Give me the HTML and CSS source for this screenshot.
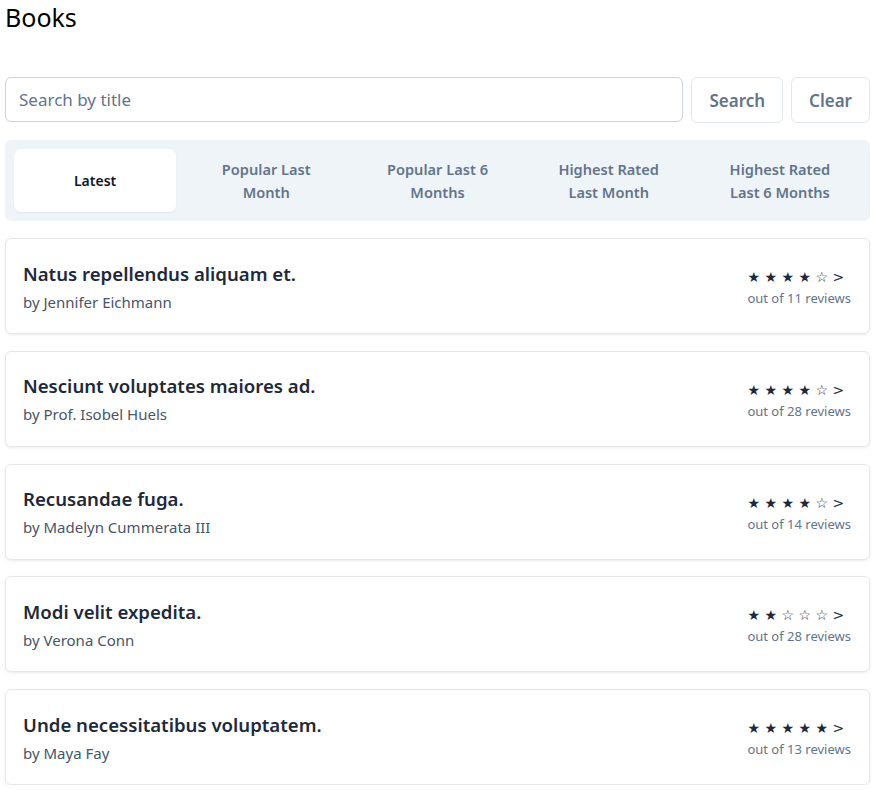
FILE: index.html
```html
<!DOCTYPE html>
<html lang="en">
<head>
<meta charset="utf-8">
<title>Books</title>
<link rel="stylesheet" href="styles.css">
</head>
<body>
<div class="page">
  <h1 class="title">Books</h1>
  <form class="search">
    <input class="search-input" type="text" placeholder="Search by title">
    <button class="btn" type="button">Search</button>
    <button class="btn" type="button">Clear</button>
  </form>
  <div class="tabs">
    <button class="tab active" type="button">Latest</button>
    <button class="tab" type="button">Popular Last<br>Month</button>
    <button class="tab" type="button">Popular Last 6<br>Months</button>
    <button class="tab" type="button">Highest Rated<br>Last Month</button>
    <button class="tab" type="button">Highest Rated<br>Last 6 Months</button>
  </div>
  <ul class="list">
    <li class="card">
      <div class="info">
        <div class="book-title">Natus repellendus aliquam et.</div>
        <div class="author">by Jennifer Eichmann</div>
      </div>
      <div class="rating">
        <div class="stars">★ ★ ★ ★ ☆ &gt;</div>
        <div class="reviews">out of 11 reviews</div>
      </div>
    </li>
    <li class="card">
      <div class="info">
        <div class="book-title">Nesciunt voluptates maiores ad.</div>
        <div class="author">by Prof. Isobel Huels</div>
      </div>
      <div class="rating">
        <div class="stars">★ ★ ★ ★ ☆ &gt;</div>
        <div class="reviews">out of 28 reviews</div>
      </div>
    </li>
    <li class="card">
      <div class="info">
        <div class="book-title">Recusandae fuga.</div>
        <div class="author">by Madelyn Cummerata III</div>
      </div>
      <div class="rating">
        <div class="stars">★ ★ ★ ★ ☆ &gt;</div>
        <div class="reviews">out of 14 reviews</div>
      </div>
    </li>
    <li class="card">
      <div class="info">
        <div class="book-title">Modi velit expedita.</div>
        <div class="author">by Verona Conn</div>
      </div>
      <div class="rating">
        <div class="stars">★ ★ ☆ ☆ ☆ &gt;</div>
        <div class="reviews">out of 28 reviews</div>
      </div>
    </li>
    <li class="card">
      <div class="info">
        <div class="book-title">Unde necessitatibus voluptatem.</div>
        <div class="author">by Maya Fay</div>
      </div>
      <div class="rating">
        <div class="stars">★ ★ ★ ★ ★ &gt;</div>
        <div class="reviews">out of 13 reviews</div>
      </div>
    </li>
  </ul>
</div>
</body>
</html>
```

FILE: styles.css
```css
* { box-sizing: border-box; }
html, body { margin: 0; padding: 0; background: #fff; }
body {
  font-family: "Noto Sans", "Open Sans", sans-serif;
  color: #1e293b;
}
.page {
  padding: 0 6px 0 5px;
}
.title {
  margin: 0;
  padding-top: 1px;
  font-size: 25px;
  font-weight: 400;
  line-height: 32px;
  color: #000;
}
.search {
  display: flex;
  gap: 8px;
  margin-top: 44px;
}
.search-input {
  flex: 1;
  height: 45px;
  border: 1px solid #cbd5e1;
  border-radius: 6px;
  padding: 0 13px;
  font: inherit;
  font-size: 17px;
  color: #1e293b;
}
.search-input::placeholder { color: #64748b; }
.btn {
  height: 46px;
  padding: 0 17px;
  background: #fff;
  border: 1px solid #e2e8f0;
  border-radius: 6px;
  font: inherit;
  font-size: 17px;
  font-weight: 600;
  color: #64748b;
}
.tabs {
  margin-top: 17px;
  background: #eff4f8;
  border-radius: 6px;
  padding: 9px;
  display: grid;
  grid-template-columns: repeat(5, 1fr);
  gap: 9px;
}
.tab {
  height: 63px;
  border: none;
  background: transparent;
  border-radius: 7px;
  font: inherit;
  font-size: 14.6px;
  font-weight: 600;
  line-height: 23px;
  color: #64748b;
}
.tab.active {
  background: #fff;
  color: #0f172a;
  font-size: 14px;
  box-shadow: 0 1px 2px rgba(0,0,0,0.05);
}
.list {
  list-style: none;
  margin: 17px 0 0;
  padding: 0;
  display: flex;
  flex-direction: column;
  gap: 16.75px;
}
.card {
  height: 96px;
  border: 1px solid #e5e7eb;
  border-radius: 6px;
  box-shadow: 0 1px 3px rgba(0,0,0,0.08);
  padding: 0 18px 0 17px;
  display: flex;
  align-items: center;
  justify-content: space-between;
}
.book-title {
  font-size: 18.6px;
  font-weight: 600;
  color: #1e293b;
  line-height: 26px;
}
.author {
  margin-top: 5px;
  font-size: 15px;
  color: #475569;
  line-height: 20px;
}
.rating {
  text-align: left;
  padding-top: 2px;
}
.stars {
  font-size: 14px;
  color: #1e293b;
  line-height: 20px;
  font-family: "DejaVu Sans", sans-serif;
}
.reviews {
  margin-top: 2px;
  font-size: 13px;
  color: #64748b;
  line-height: 18px;
}
```
